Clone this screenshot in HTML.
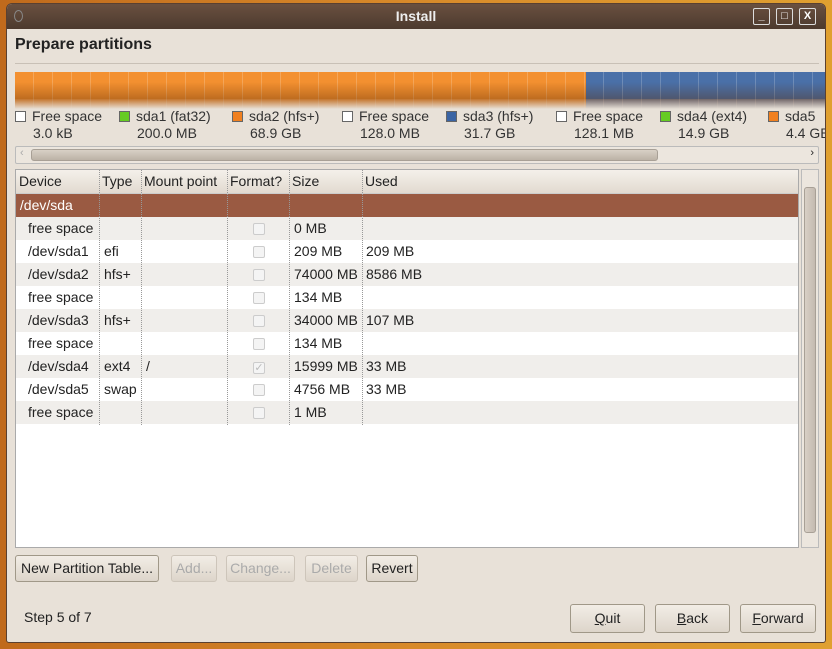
<!DOCTYPE html><html><head><style>
*{margin:0;padding:0;box-sizing:border-box}
body{width:832px;height:649px;overflow:hidden;background:linear-gradient(90deg,#c06a1c,#d88a2a 50%,#e0a030);font-family:"Liberation Sans","DejaVu Sans",sans-serif;font-size:14px;color:#222;position:relative}
.win{position:absolute;left:6px;top:3px;width:820px;height:640px;background:#e8e1d8;border-radius:6px 6px 3px 3px;overflow:hidden;border:1px solid #5a4030}
.title{height:25px;background:linear-gradient(#6a5040,#4c3a2e);color:#eee;font-weight:bold;text-align:center;line-height:24px;font-size:14px;position:relative}
.tb{position:absolute;top:4px;width:17px;height:17px;border:1px solid #ddd;border-radius:2px;color:#fff;font-size:11px;line-height:15px;text-align:center}
.abs{position:absolute}
h1{position:absolute;left:8px;top:32px;font-size:16px;font-weight:bold;color:#222}
.bar{position:absolute;left:8px;top:68px;width:812px;height:37px;background:repeating-linear-gradient(90deg,transparent 0 18px,rgba(255,255,255,.2) 18px 19px),linear-gradient(90deg,#f39030 0 571px,#4a70a8 571px);}
.bar:before{content:"";position:absolute;left:0;right:0;top:10px;height:17px;background:linear-gradient(rgba(0,0,0,0),rgba(90,40,0,.35))}
.bar:after{content:"";position:absolute;left:0;right:0;top:27px;bottom:0;background:linear-gradient(rgba(150,90,40,.5),rgba(232,225,216,1))}
.lg{position:absolute;top:104px;font-size:14px;color:#333}
.lg i{display:inline-block;width:11px;height:11px;border:1px solid #666;margin-right:6px;vertical-align:-1px}
.lg div{padding-left:18px;margin-top:1px}
.sb{position:absolute;left:8px;top:142px;width:804px;height:18px;border:1px solid #bbb;background:#ece6de;border-radius:2px}
.th{position:absolute;left:8px;top:165px;width:784px;height:379px;background:#fff;border:1px solid #aaa}
.hd{height:24px;background:linear-gradient(#f4f0ea,#e2dad0);border-bottom:1px solid #ccc;position:relative}
.row{height:23px;position:relative;line-height:23px}
.row:nth-child(odd){background:#f0eeeb}
.c{position:absolute;top:0}
.sep{position:absolute;top:0;bottom:0;border-left:1px dotted #999}
.cb{display:inline-block;width:12px;height:12px;border:1px solid #ccc;border-radius:2px;background:#f4f4f4;vertical-align:-2px}
.btn{position:absolute;height:27px;border:1px solid #a09888;border-radius:3px;background:linear-gradient(#f2ede6,#ddd5ca);line-height:25px;text-align:center;font-size:14px}
.dis{color:#aaa;border-color:#cdc5ba}
</style></head><body>
<div class="win">
<div class="title"><span class="abs" style="left:7px;top:6px;width:9px;height:12px;border:1px solid #888;border-radius:50%"></span>Install
<span class="tb" style="left:746px">_</span><span class="tb" style="left:769px">□</span><span class="tb" style="left:792px">X</span></div>
<h1>Prepare partitions</h1>
<div class="abs" style="left:8px;top:59px;width:804px;border-top:1px solid #c8c0b6"></div>
<div class="bar"></div>
<div class="lg" style="left:8px"><i style="background:#fff"></i>Free space<div>3.0 kB</div></div>
<div class="lg" style="left:112px"><i style="background:#6c2"></i>sda1 (fat32)<div>200.0 MB</div></div>
<div class="lg" style="left:225px"><i style="background:#f08020"></i>sda2 (hfs+)<div>68.9 GB</div></div>
<div class="lg" style="left:335px"><i style="background:#fff"></i>Free space<div>128.0 MB</div></div>
<div class="lg" style="left:439px"><i style="background:#3a64a4"></i>sda3 (hfs+)<div>31.7 GB</div></div>
<div class="lg" style="left:549px"><i style="background:#fff"></i>Free space<div>128.1 MB</div></div>
<div class="lg" style="left:653px"><i style="background:#6c2"></i>sda4 (ext4)<div>14.9 GB</div></div>
<div class="lg" style="left:761px;white-space:nowrap"><i style="background:#f08020"></i>sda5<div>4.4 GB</div></div>
<div class="sb"><div class="abs" style="left:15px;top:2px;width:627px;height:12px;border:1px solid #a8a096;border-radius:3px;background:linear-gradient(#d8d0c6,#bcb2a6)"></div><span class="abs" style="right:4px;top:0;font-size:11px">›</span><span class="abs" style="left:4px;top:0;font-size:11px;color:#aaa">‹</span></div>
<div class="th">
<div class="hd"><span class="c" style="left:3px;top:3px">Device</span><span class="c" style="left:86px;top:3px">Type</span><span class="c" style="left:128px;top:3px">Mount point</span><span class="c" style="left:214px;top:3px">Format?</span><span class="c" style="left:276px;top:3px">Size</span><span class="c" style="left:349px;top:3px">Used</span></div>
<div class="row" style="background:#9a5a42;color:#fff">&nbsp;/dev/sda</div>
<div style="position:relative">
<div class="row"><span class="c" style="left:12px">free space</span><span class="c" style="left:237px"><i class="cb"></i></span><span class="c" style="left:278px">0 MB</span></div>
<div class="row" style="background:#fff"><span class="c" style="left:12px">/dev/sda1</span><span class="c" style="left:88px">efi</span><span class="c" style="left:237px"><i class="cb"></i></span><span class="c" style="left:278px">209 MB</span><span class="c" style="left:350px">209 MB</span></div>
<div class="row"><span class="c" style="left:12px">/dev/sda2</span><span class="c" style="left:88px">hfs+</span><span class="c" style="left:237px"><i class="cb"></i></span><span class="c" style="left:278px">74000 MB</span><span class="c" style="left:350px">8586 MB</span></div>
<div class="row" style="background:#fff"><span class="c" style="left:12px">free space</span><span class="c" style="left:237px"><i class="cb"></i></span><span class="c" style="left:278px">134 MB</span></div>
<div class="row"><span class="c" style="left:12px">/dev/sda3</span><span class="c" style="left:88px">hfs+</span><span class="c" style="left:237px"><i class="cb"></i></span><span class="c" style="left:278px">34000 MB</span><span class="c" style="left:350px">107 MB</span></div>
<div class="row" style="background:#fff"><span class="c" style="left:12px">free space</span><span class="c" style="left:237px"><i class="cb"></i></span><span class="c" style="left:278px">134 MB</span></div>
<div class="row"><span class="c" style="left:12px">/dev/sda4</span><span class="c" style="left:88px">ext4</span><span class="c" style="left:130px">/</span><span class="c" style="left:237px;color:#bbb;font-size:11px"><i class="cb" style="text-align:center;line-height:10px">✓</i></span><span class="c" style="left:278px">15999 MB</span><span class="c" style="left:350px">33 MB</span></div>
<div class="row" style="background:#fff"><span class="c" style="left:12px">/dev/sda5</span><span class="c" style="left:88px">swap</span><span class="c" style="left:237px"><i class="cb"></i></span><span class="c" style="left:278px">4756 MB</span><span class="c" style="left:350px">33 MB</span></div>
<div class="row"><span class="c" style="left:12px">free space</span><span class="c" style="left:237px"><i class="cb"></i></span><span class="c" style="left:278px">1 MB</span></div>
</div>
<div class="sep" style="left:83px;top:0;height:255px"></div><div class="sep" style="left:125px;height:255px"></div><div class="sep" style="left:211px;height:255px"></div><div class="sep" style="left:273px;height:255px"></div><div class="sep" style="left:346px;height:255px"></div>
</div>
<div class="abs" style="left:794px;top:165px;width:18px;height:379px;border:1px solid #bbb;background:#ece6de"><div class="abs" style="left:2px;top:17px;width:12px;height:346px;border:1px solid #a8a096;border-radius:3px;background:linear-gradient(90deg,#d8d0c6,#c4bab0)"></div></div>
<div class="btn" style="left:8px;top:551px;width:144px">New Partition Table...</div>
<div class="btn dis" style="left:164px;top:551px;width:46px">Add...</div>
<div class="btn dis" style="left:219px;top:551px;width:69px">Change...</div>
<div class="btn dis" style="left:298px;top:551px;width:53px">Delete</div>
<div class="btn" style="left:359px;top:551px;width:52px">Revert</div>
<div class="abs" style="left:17px;top:605px">Step 5 of 7</div>
<div class="btn" style="left:563px;top:600px;width:75px;height:29px;line-height:27px"><u>Q</u>uit</div>
<div class="btn" style="left:648px;top:600px;width:75px;height:29px;line-height:27px"><u>B</u>ack</div>
<div class="btn" style="left:733px;top:600px;width:76px;height:29px;line-height:27px"><u>F</u>orward</div>
</div>
</body></html>
